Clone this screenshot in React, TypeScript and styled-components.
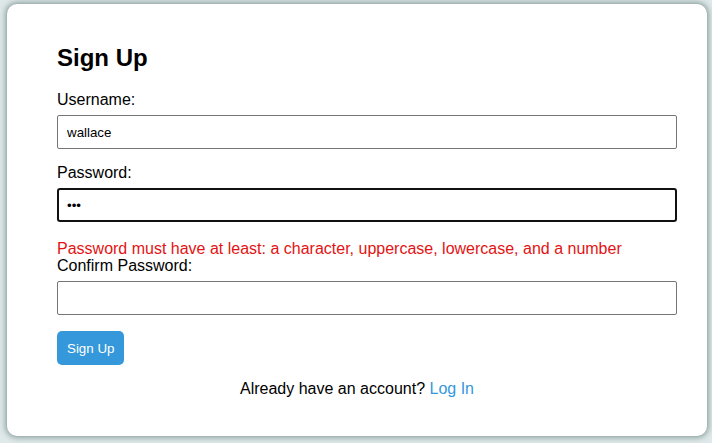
import React from "react";
import styled, { createGlobalStyle } from "styled-components";

const GlobalStyle = createGlobalStyle`
  html, body { margin: 0; padding: 0; }
  body {
    background: #dfe9e9;
    font-family: "Liberation Sans", Arial, sans-serif;
  }
  * { box-sizing: border-box; }
`;

const Page = styled.div`
  min-height: 100vh;
  display: flex;
  align-items: flex-start;
  justify-content: center;
  padding: 4px 5px 0 7px;
`;

const Card = styled.div`
  width: 700px;
  background: #ffffff;
  border-radius: 10px;
  padding: 40px 50px 38px;
  box-shadow: 0 0 6px 1px rgba(40, 70, 70, 0.55);
  display: flex;
  flex-direction: column;
`;

const Title = styled.h2`
  margin: 0 0 19px;
  font-size: 24px;
  line-height: 28px;
  font-weight: bold;
  color: #000;
`;

const Field = styled.div<{ $gap?: number }>`
  display: flex;
  flex-direction: column;
  margin-bottom: ${(p) => p.$gap ?? 15}px;
`;

const Label = styled.label`
  font-size: 16px;
  line-height: 18px;
  color: #000;
  margin-bottom: 6px;
`;

const Input = styled.input<{ $focused?: boolean }>`
  width: 620px;
  height: 34px;
  font-family: "Liberation Sans", Arial, sans-serif;
  font-size: 13.33px;
  line-height: 16px;
  color: #000;
  background: #fff;
  border: ${(p) => (p.$focused ? "2px solid #111" : "1px solid #767676")};
  border-radius: ${(p) => (p.$focused ? "3px" : "2px")};
  padding: ${(p) => (p.$focused ? "0 8px" : "0 9px")};
  outline: none;
`;

const ErrorText = styled.div`
  color: #e31313;
  font-size: 16px;
  line-height: 17px;
  margin: 18px 0 0;
`;

const Button = styled.button`
  align-self: flex-start;
  height: 34px;
  padding: 0 10px;
  border: none;
  border-radius: 5px;
  background: #3498db;
  color: #fff;
  font-family: "Liberation Sans", Arial, sans-serif;
  font-size: 13.33px;
  margin-top: 16px;
  cursor: pointer;
`;

const Footer = styled.p`
  margin: 15px 0 0;
  text-align: center;
  font-size: 16px;
  line-height: 18px;
  color: #000;
`;

const Link = styled.a`
  color: #3498db;
  text-decoration: none;
`;

export default function App() {
  return (
    <>
      <GlobalStyle />
      <Page>
        <Card>
          <Title>Sign Up</Title>
          <Field>
            <Label>Username:</Label>
            <Input type="text" defaultValue="wallace" />
          </Field>
          <Field $gap={0}>
            <Label>Password:</Label>
            <Input type="password" defaultValue="abc" $focused />
          </Field>
          <ErrorText>
            Password must have at least: a character, uppercase, lowercase, and a number
          </ErrorText>
          <Field $gap={0}>
            <Label>Confirm Password:</Label>
            <Input type="password" />
          </Field>
          <Button>Sign Up</Button>
          <Footer>
            Already have an account? <Link href="#">Log In</Link>
          </Footer>
        </Card>
      </Page>
    </>
  );
}
